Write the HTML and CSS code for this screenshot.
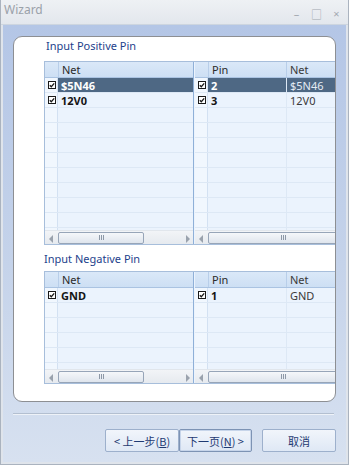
FILE: index.html
```html
<!DOCTYPE html>
<html>
  <head>
    <title>Wizard</title>
    <link rel="stylesheet" href="styles.css">
  </head>
  <body>
    <div class="window">
      <div class="titlebar">
        <span class="title">Wizard</span>
        <div class="controls">
          <span class="ctl">&#8211;</span>
          <span class="ctl">&#9633;</span>
          <span class="ctl">&#215;</span>
        </div>
      </div>

      <div class="client">
        <div class="panel">
          <div class="label label-pos">Input Positive Pin</div>
          <div class="grids grids-pos">
            <div class="grid grid-net">
              <div class="grid-head">
                <span class="rh"></span>
                <span class="col col-net">Net</span>
              </div>
              <div class="grid-body">
                <div class="row selected">
                  <span class="rh"><svg class="check" viewBox="0 0 8 8"><rect x="0.5" y="0.5" width="7" height="7"/><path d="M1.8 4.2 L3.3 5.7 L6.2 2.3"/></svg></span>
                  <span class="col col-net b">$5N46</span>
                </div>
                <div class="row">
                  <span class="rh"><svg class="check" viewBox="0 0 8 8"><rect x="0.5" y="0.5" width="7" height="7"/><path d="M1.8 4.2 L3.3 5.7 L6.2 2.3"/></svg></span>
                  <span class="col col-net b">12V0</span>
                </div>
                <div class="row"><span class="rh"></span><span class="col col-net"></span></div>
                <div class="row"><span class="rh"></span><span class="col col-net"></span></div>
                <div class="row"><span class="rh"></span><span class="col col-net"></span></div>
                <div class="row"><span class="rh"></span><span class="col col-net"></span></div>
                <div class="row"><span class="rh"></span><span class="col col-net"></span></div>
                <div class="row"><span class="rh"></span><span class="col col-net"></span></div>
                <div class="row"><span class="rh"></span><span class="col col-net"></span></div>
                <div class="row"><span class="rh"></span><span class="col col-net"></span></div>
                <div class="row"><span class="rh"></span><span class="col col-net"></span></div>
              </div>
              <div class="hscroll">
                <span class="arrow arrow-left"></span>
                <div class="track"><span class="thumb thumb-short"><i></i></span></div>
                <span class="arrow arrow-right"></span>
              </div>
            </div>

            <div class="grid grid-pin">
              <div class="grid-head">
                <span class="rh"></span>
                <span class="col col-pin">Pin</span>
                <span class="col col-pnet">Net</span>
              </div>
              <div class="grid-body">
                <div class="row selected">
                  <span class="rh"><svg class="check" viewBox="0 0 8 8"><rect x="0.5" y="0.5" width="7" height="7"/><path d="M1.8 4.2 L3.3 5.7 L6.2 2.3"/></svg></span>
                  <span class="col col-pin b">2</span>
                  <span class="col col-pnet">$5N46</span>
                </div>
                <div class="row">
                  <span class="rh"><svg class="check" viewBox="0 0 8 8"><rect x="0.5" y="0.5" width="7" height="7"/><path d="M1.8 4.2 L3.3 5.7 L6.2 2.3"/></svg></span>
                  <span class="col col-pin b">3</span>
                  <span class="col col-pnet">12V0</span>
                </div>
                <div class="row"><span class="rh"></span><span class="col col-pin"></span><span class="col col-pnet"></span></div>
                <div class="row"><span class="rh"></span><span class="col col-pin"></span><span class="col col-pnet"></span></div>
                <div class="row"><span class="rh"></span><span class="col col-pin"></span><span class="col col-pnet"></span></div>
                <div class="row"><span class="rh"></span><span class="col col-pin"></span><span class="col col-pnet"></span></div>
                <div class="row"><span class="rh"></span><span class="col col-pin"></span><span class="col col-pnet"></span></div>
                <div class="row"><span class="rh"></span><span class="col col-pin"></span><span class="col col-pnet"></span></div>
                <div class="row"><span class="rh"></span><span class="col col-pin"></span><span class="col col-pnet"></span></div>
                <div class="row"><span class="rh"></span><span class="col col-pin"></span><span class="col col-pnet"></span></div>
                <div class="row"><span class="rh"></span><span class="col col-pin"></span><span class="col col-pnet"></span></div>
              </div>
              <div class="hscroll">
                <span class="arrow arrow-left"></span>
                <div class="track"><span class="thumb thumb-long"><i></i></span></div>
              </div>
            </div>
          </div>

          <div class="label label-neg">Input Negative Pin</div>
          <div class="grids grids-neg">
            <div class="grid grid-net">
              <div class="grid-head">
                <span class="rh"></span>
                <span class="col col-net">Net</span>
              </div>
              <div class="grid-body">
                <div class="row">
                  <span class="rh"><svg class="check" viewBox="0 0 8 8"><rect x="0.5" y="0.5" width="7" height="7"/><path d="M1.8 4.2 L3.3 5.7 L6.2 2.3"/></svg></span>
                  <span class="col col-net b">GND</span>
                </div>
                <div class="row"><span class="rh"></span><span class="col col-net"></span></div>
                <div class="row"><span class="rh"></span><span class="col col-net"></span></div>
                <div class="row"><span class="rh"></span><span class="col col-net"></span></div>
                <div class="row"><span class="rh"></span><span class="col col-net"></span></div>
                <div class="row"><span class="rh"></span><span class="col col-net"></span></div>
              </div>
              <div class="hscroll">
                <span class="arrow arrow-left"></span>
                <div class="track"><span class="thumb thumb-short"><i></i></span></div>
                <span class="arrow arrow-right"></span>
              </div>
            </div>

            <div class="grid grid-pin">
              <div class="grid-head">
                <span class="rh"></span>
                <span class="col col-pin">Pin</span>
                <span class="col col-pnet">Net</span>
              </div>
              <div class="grid-body">
                <div class="row">
                  <span class="rh"><svg class="check" viewBox="0 0 8 8"><rect x="0.5" y="0.5" width="7" height="7"/><path d="M1.8 4.2 L3.3 5.7 L6.2 2.3"/></svg></span>
                  <span class="col col-pin b">1</span>
                  <span class="col col-pnet">GND</span>
                </div>
                <div class="row"><span class="rh"></span><span class="col col-pin"></span><span class="col col-pnet"></span></div>
                <div class="row"><span class="rh"></span><span class="col col-pin"></span><span class="col col-pnet"></span></div>
                <div class="row"><span class="rh"></span><span class="col col-pin"></span><span class="col col-pnet"></span></div>
                <div class="row"><span class="rh"></span><span class="col col-pin"></span><span class="col col-pnet"></span></div>
                <div class="row"><span class="rh"></span><span class="col col-pin"></span><span class="col col-pnet"></span></div>
              </div>
              <div class="hscroll">
                <span class="arrow arrow-left"></span>
                <div class="track"><span class="thumb thumb-long"><i></i></span></div>
              </div>
            </div>
          </div>
        </div>

        <div class="separator"></div>

        <div class="buttons">
          <button class="btn btn-back" type="button">&lt; 上一步(<u>B</u>)</button>
          <button class="btn btn-next" type="button">下一页(<u>N</u>) &gt;</button>
          <button class="btn btn-cancel" type="button">取消</button>
        </div>
      </div>
    </div>
  </body>
</html>
```

FILE: styles.css
```css
* {
  box-sizing: border-box;
}

html,
body {
  margin: 0;
  width: 349px;
  height: 465px;
  overflow: hidden;
}

body {
  font-family: 'Noto Sans', 'Noto Sans CJK SC', sans-serif;
  font-size: 11px;
  color: #1e1e1e;
  background: #dde3ea;
}

.window {
  display: flex;
  flex-direction: column;
  width: 349px;
  height: 465px;
  border: 1px solid #aab3bf;
  border-top: none;
  background: #dfe4eb;
}

/* title bar */
.titlebar {
  display: flex;
  justify-content: space-between;
  align-items: center;
  height: 25px;
  padding: 0 6px 0 3px;
  background: linear-gradient(to bottom, #eef1f4, #e3e7ed);
  border-bottom: 1px solid #cdd5df;
}

.title {
  font-size: 12px;
  color: #9aa1a9;
  margin-top: -6px;
}

.controls {
  display: flex;
  gap: 9px;
  margin-top: 3px;
  color: #a3a9b1;
  font-size: 11px;
}

.ctl {
  width: 11px;
  text-align: center;
}

/* client area */
.client {
  flex: 1;
  display: flex;
  flex-direction: column;
  margin: 0 2px 2px;
  padding: 11px 10px 0 10px;
  background: linear-gradient(to bottom, #b4c6e6, #c5d3ea 55%, #d7e1f0);
}

.panel {
  height: 366px;
  padding: 0 1px 0 30px;
  background: #ffffff;
  border: 1px solid #8d8f93;
  border-radius: 9px;
  overflow: hidden;
}

.label {
  color: #1d3f8c;
  font-size: 11px;
  line-height: 14px;
}

.label-pos {
  height: 24px;
  padding: 2px 0 0 2px;
}

.label-neg {
  height: 26px;
  padding-top: 7px;
}

/* grids */
.grids {
  display: flex;
  width: 310px;
  border: 1px solid #a7bedb;
  border-right: none;
}

.grids-pos {
  height: 184px;
}

.grids-neg {
  height: 113px;
}

.grid {
  display: flex;
  flex-direction: column;
  background: #ebf3fd;
  overflow: hidden;
}

.grid-net {
  width: 149px;
  border-right: 1px solid #8fb0d8;
}

.grid-pin {
  flex: 1;
  padding-left: 1px;
}

.grid-head {
  display: flex;
  height: 16px;
  flex: none;
  background: linear-gradient(to bottom, #dae8f8, #cddff4);
  border-bottom: 1px solid #aac3e2;
  color: #2a2a2a;
  line-height: 15px;
}

.grid-head .col {
  border-left: 1px solid #b8cee9;
}

.grid-body {
  flex: 1;
  overflow: hidden;
}

.row {
  display: flex;
  height: 15px;
  line-height: 15px;
  border-bottom: 1px solid #dde8f5;
}

.rh {
  display: flex;
  align-items: center;
  justify-content: center;
  width: 13px;
  flex: none;
  background: #f1f7fe;
  border-right: 1px solid #d3e1f2;
}

.grid-head .rh {
  background: transparent;
  border-right: none;
}

.col {
  padding-left: 3px;
  white-space: nowrap;
  overflow: hidden;
}

.col-net {
  flex: 1;
}

.col-pin {
  width: 78px;
  flex: none;
}

.col-pnet {
  flex: 1;
  border-left: 1px solid #dde8f5;
  color: #3a3a3a;
}

.b {
  font-weight: 700;
  color: #151515;
}

.row.selected .col {
  background: #4e6884;
  color: #ffffff;
}

.row.selected .col-pnet {
  color: #e4ebf3;
}

.check {
  width: 8px;
  height: 8px;
  margin-left: 2px;
}

.check rect {
  fill: #ffffff;
  stroke: #1a1a1a;
  stroke-width: 1;
}

.check path {
  fill: none;
  stroke: #1a1a1a;
  stroke-width: 1.3;
}

/* horizontal scrollbar */
.hscroll {
  display: flex;
  align-items: center;
  height: 14px;
  flex: none;
  background: linear-gradient(to bottom, #f2f4f7, #e6eaef);
  border-top: 1px solid #e1e6ec;
}

.arrow {
  width: 12px;
  height: 12px;
  flex: none;
  position: relative;
}

.arrow::after {
  content: '';
  position: absolute;
  top: 3px;
  border-top: 4px solid transparent;
  border-bottom: 4px solid transparent;
}

.arrow-left::after {
  left: 4px;
  border-right: 4px solid #9aa2ad;
}

.arrow-right::after {
  left: 5px;
  border-left: 4px solid #9aa2ad;
}

.track {
  flex: 1;
  display: flex;
  overflow: hidden;
}

.thumb {
  display: flex;
  justify-content: center;
  align-items: center;
  height: 12px;
  flex: none;
  margin-left: 1px;
  border: 1px solid #97a5b8;
  border-radius: 2px;
  background: linear-gradient(to bottom, #f5f7fa, #dfe5ed);
}

.thumb i {
  width: 5px;
  height: 5px;
  border-left: 1px solid #8d98a7;
  border-right: 1px solid #8d98a7;
  position: relative;
}

.thumb i::after {
  content: '';
  position: absolute;
  left: 1px;
  top: 0;
  width: 1px;
  height: 5px;
  background: #8d98a7;
}

.thumb-short {
  width: 86px;
}

.thumb-long {
  width: 150px;
}

/* separator and buttons */
.separator {
  height: 2px;
  margin-top: 11px;
  margin-right: 2px;
  border-top: 1px solid #b3bfd0;
  border-bottom: 1px solid #eef2f8;
}

.buttons {
  display: flex;
  justify-content: flex-end;
  margin-top: 14px;
  padding-right: 0;
}

.btn {
  height: 23px;
  padding: 0;
  font-family: 'Noto Sans CJK SC', 'Noto Sans', sans-serif;
  font-size: 11px;
  color: #1f3a72;
  background: linear-gradient(to bottom, #f1f5fb, #dfe8f5);
  border: 1px solid #9db0cc;
  border-radius: 2px;
  cursor: pointer;
}

.btn u {
  text-decoration: underline;
}

.btn-back {
  width: 74px;
}

.btn-next {
  width: 73px;
  border-color: #7d93b4;
  box-shadow: inset 0 0 0 1px #c7d5ea;
}

.btn-cancel {
  width: 74px;
  margin-left: 10px;
}
```
